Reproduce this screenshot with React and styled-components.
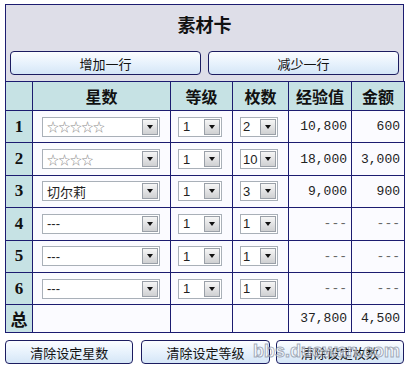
import styled, { createGlobalStyle } from 'styled-components';

const GlobalStyle = createGlobalStyle`
  body {
    margin: 0;
    background: #ffffff;
    font-family: "Liberation Sans", "Noto Sans CJK SC", sans-serif;
  }
`

const Page = styled.div`
  position: relative;
  width: 399px;
  padding: 4px 0 0 5px;
`

const Panel = styled.section`
  background: #dedee8;
  border: 1px solid #1c1c70;
  border-bottom: none;
  padding: 0 4px 6px 4px;
`

const Title = styled.h3`
  margin: 0;
  height: 46px;
  line-height: 38px;
  text-align: center;
  font-family: "Noto Sans CJK SC", sans-serif;
  font-size: 18px;
  font-weight: bold;
  color: #111;
`

const ButtonRow = styled.div`
  display: flex;
  justify-content: space-between;
`

const Button = styled.button`
  -webkit-appearance: none;
  appearance: none;
  width: ${props => props.w || 191}px;
  height: 24px;
  padding: 0;
  margin: 0;
  border: 1px solid #1c1c60;
  border-radius: 4px;
  background: linear-gradient(#fbfdff, #e6f1fc 55%, #d5e6f7);
  font-family: "Noto Sans CJK SC", sans-serif;
  font-size: 13px;
  color: #111;
  cursor: pointer;
`

const Table = styled.table`
  width: 399px;
  border-collapse: collapse;
  table-layout: fixed;
  background: #fbfbff;
`

const Th = styled.th`
  height: 28px;
  padding: 0;
  border: 1px solid #1c1c70;
  background: #c6e2e4;
  font-family: "Noto Sans CJK SC", sans-serif;
  font-size: 16px;
  font-weight: bold;
  color: #111;
`

const RowHead = styled.th`
  height: ${props => props.short ? 27 : 31.4}px;
  padding: 0;
  border: 1px solid #1c1c70;
  background: #c6e2e4;
  font-family: "Liberation Serif", "Noto Sans CJK SC", serif;
  font-size: 17px;
  font-weight: bold;
  color: #111;
`

const Td = styled.td`
  padding: 0 ${props => props.num ? 4 : 0}px 0 ${props => props.num ? 0 : 7}px;
  border: 1px solid #1c1c70;
  text-align: ${props => props.num ? 'right' : 'left'};
  font-family: "Liberation Mono", monospace;
  font-size: 13px;
  color: ${props => props.empty ? '#666' : '#222'};
`

const Select = styled.div`
  display: flex;
  align-items: center;
  width: ${props => props.w}px;
  height: 20px;
  box-sizing: border-box;
  border: 1px solid #a9b0b8;
  background: #fff;
`

const SelectValue = styled.span`
  flex: 1;
  min-width: 0;
  padding-left: ${props => props.tight ? 2 : 4}px;
  overflow: hidden;
  white-space: nowrap;
  font-family: ${props => props.stars ? '"Noto Sans CJK SC"' : '"Liberation Sans", "Noto Sans CJK SC"'}, sans-serif;
  font-size: ${props => props.stars ? 12 : 13}px;
  letter-spacing: ${props => props.stars ? '-0.5px' : '0'};
  color: ${props => props.stars ? '#8a8a8a' : '#222'};
`

const Arrow = styled.span`
  flex: none;
  width: 16px;
  height: 16px;
  margin-right: 1px;
  box-sizing: border-box;
  border: 1px solid #9aa0a8;
  background: linear-gradient(#f6f6f6, #cfd0d2);
  display: flex;
  align-items: center;
  justify-content: center;

  &::after {
    content: '';
    border-left: 3px solid transparent;
    border-right: 3px solid transparent;
    border-top: 4px solid #111;
  }
`

const BottomBar = styled.div`
  display: flex;
  gap: 8px;
  margin-top: 7px;

  & > :last-child {
    margin-left: -2px;
  }
`

const Watermark = styled.span`
  position: absolute;
  right: 4px;
  bottom: 2px;
  font-family: "Liberation Sans", sans-serif;
  font-size: 18px;
  font-weight: bold;
  color: rgba(255, 255, 255, 0.6);
  -webkit-text-stroke: 1px rgba(110, 120, 140, 0.6);
  pointer-events: none;
`

const Dropdown = ({ value, w, stars, tight }) => (
  <Select w={w}>
    <SelectValue stars={stars} tight={tight}>{value}</SelectValue>
    <Arrow />
  </Select>
)

const rows = [
  { star: '☆☆☆☆☆', stars: true, level: '1', count: '2', exp: '10,800', gold: '600' },
  { star: '☆☆☆☆', stars: true, level: '1', count: '10', exp: '18,000', gold: '3,000' },
  { star: '切尔莉', level: '1', count: '3', exp: '9,000', gold: '900' },
  { star: '---', level: '1', count: '1', exp: '---', gold: '---' },
  { star: '---', level: '1', count: '1', exp: '---', gold: '---' },
  { star: '---', level: '1', count: '1', exp: '---', gold: '---' },
]

export default function App() {
  return (
    <Page>
      <GlobalStyle />
      <Panel>
        <Title>素材卡</Title>
        <ButtonRow>
          <Button>增加一行</Button>
          <Button>减少一行</Button>
        </ButtonRow>
      </Panel>
      <Table>
        <colgroup>
          <col style={{ width: 27 }} />
          <col style={{ width: 138 }} />
          <col style={{ width: 62 }} />
          <col style={{ width: 56 }} />
          <col style={{ width: 63 }} />
          <col style={{ width: 53 }} />
        </colgroup>
        <thead>
          <tr>
            <Th />
            <Th>星数</Th>
            <Th>等级</Th>
            <Th>枚数</Th>
            <Th>经验值</Th>
            <Th>金额</Th>
          </tr>
        </thead>
        <tbody>
          {rows.map((r, i) => (
            <tr key={i}>
              <RowHead>{i + 1}</RowHead>
              <Td style={{ paddingLeft: 9 }}><Dropdown value={r.star} stars={r.stars} w={118} /></Td>
              <Td><Dropdown value={r.level} w={44} /></Td>
              <Td><Dropdown value={r.count} w={38} tight /></Td>
              <Td num empty={r.exp === '---'}>{r.exp}</Td>
              <Td num empty={r.gold === '---'}>{r.gold}</Td>
            </tr>
          ))}
          <tr>
            <RowHead short>总</RowHead>
            <Td />
            <Td />
            <Td />
            <Td num>37,800</Td>
            <Td num>4,500</Td>
          </tr>
        </tbody>
      </Table>
      <BottomBar>
        <Button w={129}>清除设定星数</Button>
        <Button w={129}>清除设定等级</Button>
        <Button w={129}>清除设定枚数</Button>
      </BottomBar>
      <Watermark>bbs.duowan.com</Watermark>
    </Page>
  )
}
